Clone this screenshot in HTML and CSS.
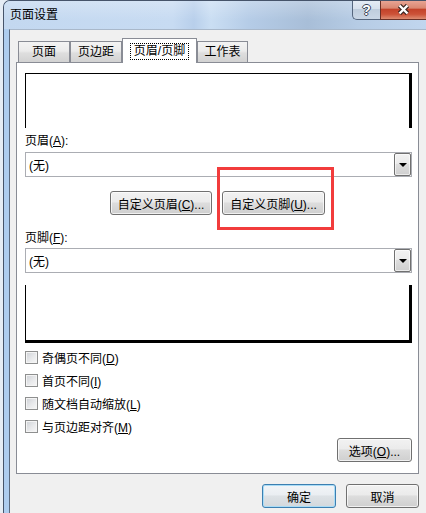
FILE: index.html
```html
<!DOCTYPE html>
<html lang="zh-CN">
<head>
    <meta charset="UTF-8">
    <title>页面设置</title>
    <link rel="stylesheet" href="styles.css">
</head>
<body>
    <div class="window">
        <div class="titlebar">
            <span class="title">页面设置</span>
            <div class="caption">
                <div class="cap-btn cap-help">?</div>
                <div class="cap-btn cap-close">
                    <svg width="13" height="11" viewBox="0 0 13 11">
                        <path d="M2.5 1.5 L10.5 9.5 M10.5 1.5 L2.5 9.5" stroke="#3b2723" stroke-width="4.6" fill="none"/>
                        <path d="M2.5 1.5 L10.5 9.5 M10.5 1.5 L2.5 9.5" stroke="#fff" stroke-width="2.4" fill="none"/>
                    </svg>
                </div>
            </div>
        </div>
        <div class="frame">
            <div class="client">
                <div class="tabs">
                    <div class="tab tab-1">页面</div>
                    <div class="tab tab-2">页边距</div>
                    <div class="tab active"><span class="focus">页眉/页脚</span></div>
                    <div class="tab tab-4">工作表</div>
                </div>
                <div class="panel">
                    <div class="preview preview-top"></div>
                    <div class="field-label">页眉(<u>A</u>):</div>
                    <div class="combo">
                        <span>(无)</span>
                        <div class="drop"><i></i></div>
                    </div>
                    <div class="custom-row">
                        <button class="btn btn-header">自定义页眉(<u>C</u>)...</button>
                        <span class="mark"><button class="btn btn-footer">自定义页脚(<u>U</u>)...</button></span>
                    </div>
                    <div class="field-label label-footer">页脚(<u>F</u>):</div>
                    <div class="combo combo-footer">
                        <span>(无)</span>
                        <div class="drop"><i></i></div>
                    </div>
                    <div class="preview preview-bottom"></div>
                    <div class="checks">
                        <label class="check-row"><span class="check"></span><span>奇偶页不同(<u>D</u>)</span></label>
                        <label class="check-row"><span class="check"></span><span>首页不同(<u>I</u>)</span></label>
                        <label class="check-row"><span class="check"></span><span>随文档自动缩放(<u>L</u>)</span></label>
                        <label class="check-row"><span class="check"></span><span>与页边距对齐(<u>M</u>)</span></label>
                    </div>
                    <div class="options-row">
                        <button class="btn btn-options">选项(<u>O</u>)...</button>
                    </div>
                </div>
                <div class="dialog-btns">
                    <button class="btn btn-ok">确定</button>
                    <button class="btn btn-cancel">取消</button>
                </div>
            </div>
        </div>
    </div>
</body>
</html>
```

FILE: styles.css
```css
*{
    margin: 0;
    padding: 0;
    box-sizing: border-box;
}
body{
    width: 426px;
    height: 513px;
    overflow: hidden;
    background-color: #e6edf5;
    font-family: "Liberation Sans", "Noto Sans CJK SC", sans-serif;
    font-size: 12px;
    color: #000;
}
u{
    text-decoration: underline;
}
.window{
    margin-left: 3px;
    width: 423px;
    height: 530px;
    border-left: 1px solid #46546a;
    border-top: 1px solid #46546a;
    border-top-left-radius: 7px;
    background-color: #aecdef;
    display: flex;
    flex-direction: column;
    overflow: hidden;
}
.titlebar{
    height: 28px;
    display: flex;
    justify-content: space-between;
    align-items: flex-start;
    background: linear-gradient(rgba(255,255,255,.25), rgba(255,255,255,0) 70%),
        linear-gradient(to right, #c3d8f0 0%, #c7dbf2 40%, #b8cfeb 45%, #cadef3 49%, #b5cce7 58%, #a8bed8 72%, #b6cce5 84%, #c1d6ee 100%);
}
.title{
    padding-left: 6px;
    line-height: 28px;
}
.caption{
    display: flex;
    margin-top: -1px;
}
.cap-btn{
    height: 20px;
    display: flex;
    align-items: center;
    justify-content: center;
    border-bottom: 1px solid #55667e;
    border-left: 1px solid #55667e;
}
.cap-help{
    width: 28px;
    border-bottom-left-radius: 5px;
    background: linear-gradient(#e6edf6 0%, #d7e1ed 45%, #bfcddd 50%, #cad7e6 100%);
    color: #fff;
    font-weight: bold;
    font-size: 14px;
    text-shadow: 1px 0 #3a4556, -1px 0 #3a4556, 0 1px #3a4556, 0 -1px #3a4556;
}
.cap-close{
    width: 46px;
    border-color: #6a3026;
    background: linear-gradient(#eaa898 0%, #da8872 42%, #c4432a 50%, #cc5238 75%, #de8d72 100%);
}
.frame{
    flex: 1;
    display: flex;
    padding-left: 5px;
}
.client{
    flex: 1;
    background-color: #f0f0f0;
    border-left: 1px solid #5b6a7e;
    border-top: 1px solid #a9b8ca;
    padding: 8px 0 0 6px;
}
.tabs{
    display: flex;
    align-items: flex-end;
    height: 24px;
    margin-left: 2px;
    position: relative;
    z-index: 1;
}
.tab{
    height: 21px;
    border: 1px solid #898c95;
    border-bottom: none;
    background: linear-gradient(#f3f3f3 0%, #ebebeb 45%, #dedede 55%, #d2d2d2 100%);
    text-align: center;
    line-height: 19px;
    padding-top: 1px;
}
.tab-1{
    width: 52px;
}
.tab-2{
    width: 52px;
}
.tab-4{
    width: 51px;
}
.tab.active{
    width: 75px;
    height: 25px;
    margin-bottom: -1px;
    background: #fff;
    padding-top: 4px;
    line-height: 15px;
}
.tab .focus{
    display: inline-block;
    padding: 0 3px;
    border: 1px dotted #000;
}
.panel{
    width: 403px;
    border: 1px solid #898c95;
    background-color: #fff;
    padding: 10px 6px 11px 8px;
    display: flex;
    flex-direction: column;
}
.preview{
    border-left: 1px solid #000;
    border-right: 3px solid #000;
}
.preview-top{
    height: 55px;
    border-top: 1px solid #000;
}
.preview-bottom{
    height: 58px;
    margin-top: 12px;
    border-bottom: 3px solid #000;
}
.field-label{
    margin-top: 5px;
    line-height: 16px;
}
.label-footer{
    margin-top: 15px;
}
.combo{
    margin-top: 3px;
    height: 25px;
    border: 1px solid #abadb3;
    display: flex;
    align-items: center;
    justify-content: space-between;
    padding-left: 3px;
}
.combo-footer{
    margin-top: 2px;
}
.drop{
    width: 17px;
    height: 23px;
    border: 1px solid #707070;
    border-radius: 2px;
    background: linear-gradient(#f2f2f2 0%, #ebebeb 45%, #dddddd 50%, #cfcfcf 100%);
    box-shadow: inset 0 0 0 1px rgba(255,255,255,.6);
    display: flex;
    align-items: center;
    justify-content: center;
}
.drop i{
    display: block;
    width: 0;
    height: 0;
    border-left: 4px solid transparent;
    border-right: 4px solid transparent;
    border-top: 4px solid #000;
    margin-top: 1px;
}
.btn{
    height: 24px;
    border: 1px solid #707070;
    border-radius: 3px;
    background: linear-gradient(#f2f2f2 0%, #ebebeb 45%, #dddddd 50%, #cfcfcf 100%);
    box-shadow: inset 0 0 0 1px rgba(255,255,255,.7);
    font-family: inherit;
    font-size: 12px;
    color: #000;
    display: block;
}
.custom-row{
    margin-top: 14px;
    display: flex;
    justify-content: center;
    gap: 10px;
    padding-right: 2px;
}
.btn-header{
    width: 102px;
}
.btn-footer{
    width: 103px;
}
.mark{
    position: relative;
    display: block;
}
.mark::after{
    content: "";
    position: absolute;
    left: -5px;
    top: -24px;
    right: -9px;
    bottom: -15px;
    border: 3px solid #f23c3c;
}
.checks{
    margin-top: 3px;
}
.check-row{
    height: 23px;
    display: flex;
    align-items: center;
    gap: 4px;
}
.check{
    width: 13px;
    height: 13px;
    border: 1px solid #8e8f8f;
    background: linear-gradient(135deg, #cdd0d5 0%, #e8e9eb 55%, #f7f7f7 100%);
    box-shadow: inset 0 0 0 1px #f4f4f4;
}
.options-row{
    display: flex;
    justify-content: flex-end;
}
.btn-options{
    width: 75px;
}
.dialog-btns{
    width: 403px;
    margin-top: 10px;
    display: flex;
    justify-content: flex-end;
    gap: 10px;
}
.btn-ok{
    width: 74px;
    border-color: #3c7fb1;
    box-shadow: inset 0 0 0 1px #a9dcf6;
    background: linear-gradient(#f2f5f8 0%, #eaeef2 45%, #dde2e6 50%, #d3d8dc 100%);
}
.btn-cancel{
    width: 73px;
}
```
